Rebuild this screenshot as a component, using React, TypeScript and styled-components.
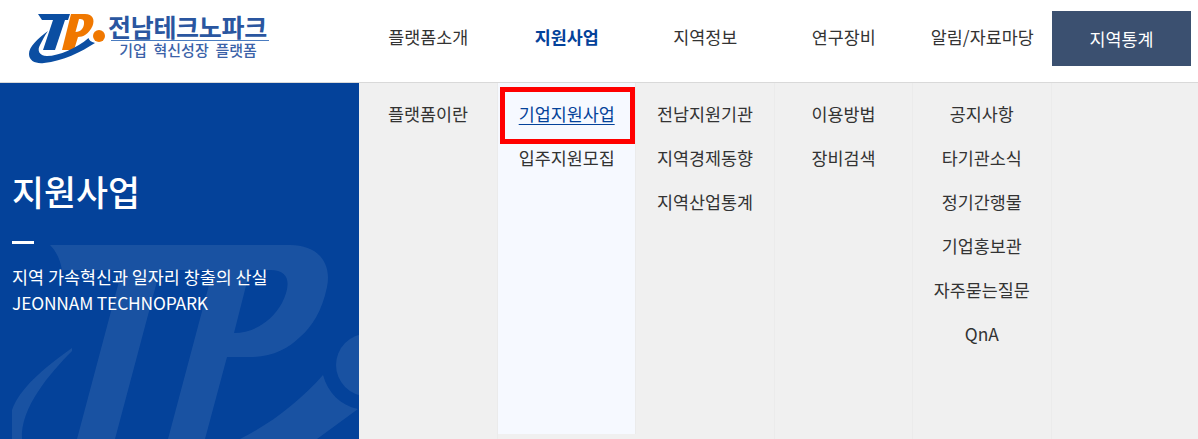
import React from "react";
import styled, { createGlobalStyle } from "styled-components";

const Global = createGlobalStyle`
  html, body { margin: 0; padding: 0; background: #fff; }
  body { width: 1198px; height: 439px; overflow: hidden; font-family: "Noto Sans CJK KR", "Noto Sans", sans-serif; }
  * { box-sizing: border-box; }
`;

const Page = styled.div`
  width: 1198px;
  height: 439px;
  display: flex;
  flex-direction: column;
  overflow: hidden;
`;

const Header = styled.header`
  height: 83px;
  flex: none;
  display: flex;
  background: #fff;
  border-bottom: 1px solid #d9d9d9;
`;

const LogoArea = styled.div`
  width: 359px;
  flex: none;
  display: flex;
  align-items: flex-start;
  padding: 14px 0 0 29px;
`;

const LogoText = styled.div`
  display: flex;
  flex-direction: column;
  align-items: flex-end;
  width: 161px;
`;

const LogoTitle = styled.div`
  width: 100%;
  height: 25px;
  font-size: 25px;
  font-weight: 700;
  line-height: 24px;
  color: #2a56a0;
  white-space: nowrap;
  letter-spacing: -0.3px;
`;

const LogoSub = styled.div`
  width: 158px;
  margin-top: 1px;
  padding-right: 4px;
  border-top: 1px solid #4a7cc0;
  text-align: center;
  font-size: 15px;
  line-height: 18px;
  color: #3b62a8;
  white-space: pre;
  font-weight: 500;
`;

const Nav = styled.nav`
  display: flex;
  flex: 1;
`;

const NavItem = styled.a<{ $active?: boolean }>`
  width: 138.5px;
  flex: none;
  height: 73px;
  display: flex;
  align-items: center;
  justify-content: center;
  font-size: 17.4px;
  font-weight: ${(p) => (p.$active ? 700 : 400)};
  color: ${(p) => (p.$active ? "#04429a" : "#333")};
  white-space: nowrap;
`;

const StatButton = styled.a`
  width: 139px;
  height: 55px;
  margin: 11px 0 0 0.500px;
  flex: none;
  display: flex;
  align-items: center;
  justify-content: center;
  background: #3b5070;
  color: #fff;
  font-size: 17.4px;
`;

const Body = styled.div`
  flex: 1;
  display: flex;
  min-height: 0;
`;

const Side = styled.aside`
  position: relative;
  width: 359px;
  flex: none;
  background: #04429a;
  color: #fff;
  padding: 84px 0 0 12px;
  overflow: hidden;
`;

const Watermark = styled.svg`
  position: absolute;
  left: 0;
  top: 0;
  width: 359px;
  height: 356px;
`;

const SideContent = styled.div`
  position: relative;
`;

const SideTitle = styled.h2`
  margin: 0;
  font-size: 34.8px;
  font-weight: 500;
  line-height: 48px;
`;

const SideBar = styled.div`
  width: 22px;
  height: 3px;
  background: #fff;
  margin: 26px 0 20px;
`;

const SideText = styled.p`
  margin: 0;
  font-size: 17.4px;
  line-height: 26px;
`;

const SideLatin = styled.span`
  letter-spacing: -0.17px;
`;

const Menu = styled.div`
  flex: 1;
  display: flex;
  background: #f0f0f0;
`;

const Column = styled.ul<{ $active?: boolean; $first?: boolean }>`
  width: ${(p) => (p.$first ? "139px" : "138.4px")};
  flex: none;
  margin: 0;
  padding: 8px 0 0;
  list-style: none;
  background: ${(p) => (p.$active ? "#f6f9ff" : "transparent")};
  border-right: 1px solid #ebebeb;
  height: ${(p) => (p.$active ? "351px" : "100%")};
`;

const MenuItem = styled.li<{ $selected?: boolean }>`
  position: relative;
  height: 44px;
  display: flex;
  align-items: center;
  justify-content: center;
  font-size: 17.4px;
  color: ${(p) => (p.$selected ? "#04429a" : "#333")};
  text-decoration: ${(p) => (p.$selected ? "underline" : "none")};
  text-underline-offset: 3px;
  white-space: nowrap;
  ${(p) =>
    p.$selected &&
    `&::after {
      content: "";
      position: absolute;
      left: 2px;
      right: 0;
      top: -4px;
      bottom: -9px;
      border: 5px solid #ff0000;
    }`}
`;

const columns: { items: string[]; active?: boolean }[] = [
  { items: ["플랫폼이란"] },
  { items: ["기업지원사업", "입주지원모집"], active: true },
  { items: ["전남지원기관", "지역경제동향", "지역산업통계"] },
  { items: ["이용방법", "장비검색"] },
  { items: ["공지사항", "타기관소식", "정기간행물", "기업홍보관", "자주묻는질문", "QnA"] },
];

const navs = ["플랫폼소개", "지원사업", "지역정보", "연구장비", "알림/자료마당"];

function LogoMark() {
  return (
    <svg width="79" height="50" viewBox="0 0 79 50" aria-hidden="true" style={{ flex: "none" }}>
      <path d="M9 0 H41 L39 6 H36 L26 36 H14 L24 6 H13 Z" fill="#0b4ea2" />
      <path
        fillRule="evenodd"
        d="M42 0 H56 C64 0 66 6 63.500 12 C60 20 54 23 49 23 L45 36 H33 Z M50 5 L46.500 18 C52 18 54.500 14 55 10 C55.500 6 54 5 50 5 Z"
        fill="#f07800"
      />
      <circle cx="70" cy="22" r="6" fill="#f07800" />
      <path
        d="M19 17 C8 25 0 33 0 40 C0 47 7 50 15 49 C34 47 52 38 66 29 C62 28 60 26 59.500 24 C48 34 30 42 18 42 C10 42 8 36 11 31 C13 27 16 21 19 17 Z"
        fill="#0b4ea2"
      />
    </svg>
  );
}

function WatermarkMark() {
  return (
    <Watermark viewBox="0 0 359 356" aria-hidden="true">
      <g fill="#ffffff" fillOpacity="0.085">
        <path
          fillRule="evenodd"
          d="M50 162 H290 C318 162 332 180 327 204 C322 228 312 244 300 254 C288 266 272 274 250 274 H227 L205 356 H168 L213 187 H160 L115 356 H77 L122 187 H62 C60 176 56 168 50 162 Z M250 187 L234 250 C254 250 272 238 282 220 C290 204 292 187 270 187 Z"
        />
        <circle cx="367" cy="282" r="31" />
        <path d="M323 292 C328 310 340 322 358 326 L317 356 H240 C272 340 300 318 323 292 Z" />
        <path d="M72 265 C44 285 20 305 12 327 V356 H22 C20 325 50 290 72 268 Z" />
      </g>
    </Watermark>
  );
}

export default function App() {
  return (
    <Page>
      <Global />
      <Header>
        <LogoArea>
          <LogoMark />
          <LogoText>
            <LogoTitle>전남테크노파크</LogoTitle>
            <LogoSub>{"기업  혁신성장  플랫폼"}</LogoSub>
          </LogoText>
        </LogoArea>
        <Nav>
          {navs.map((n) => (
            <NavItem key={n} $active={n === "지원사업"}>
              {n}
            </NavItem>
          ))}
          <StatButton>지역통계</StatButton>
        </Nav>
      </Header>
      <Body>
        <Side>
          <WatermarkMark />
          <SideContent>
            <SideTitle>지원사업</SideTitle>
            <SideBar />
            <SideText>
              지역 가속혁신과 일자리 창출의 산실
              <br />
              <SideLatin>JEONNAM TECHNOPARK</SideLatin>
            </SideText>
          </SideContent>
        </Side>
        <Menu>
          {columns.map((c, i) => (
            <Column key={i} $active={c.active} $first={i === 0}>
              {c.items.map((t) => (
                <MenuItem key={t} $selected={t === "기업지원사업"}>
                  {t}
                </MenuItem>
              ))}
            </Column>
          ))}
        </Menu>
      </Body>
    </Page>
  );
}
